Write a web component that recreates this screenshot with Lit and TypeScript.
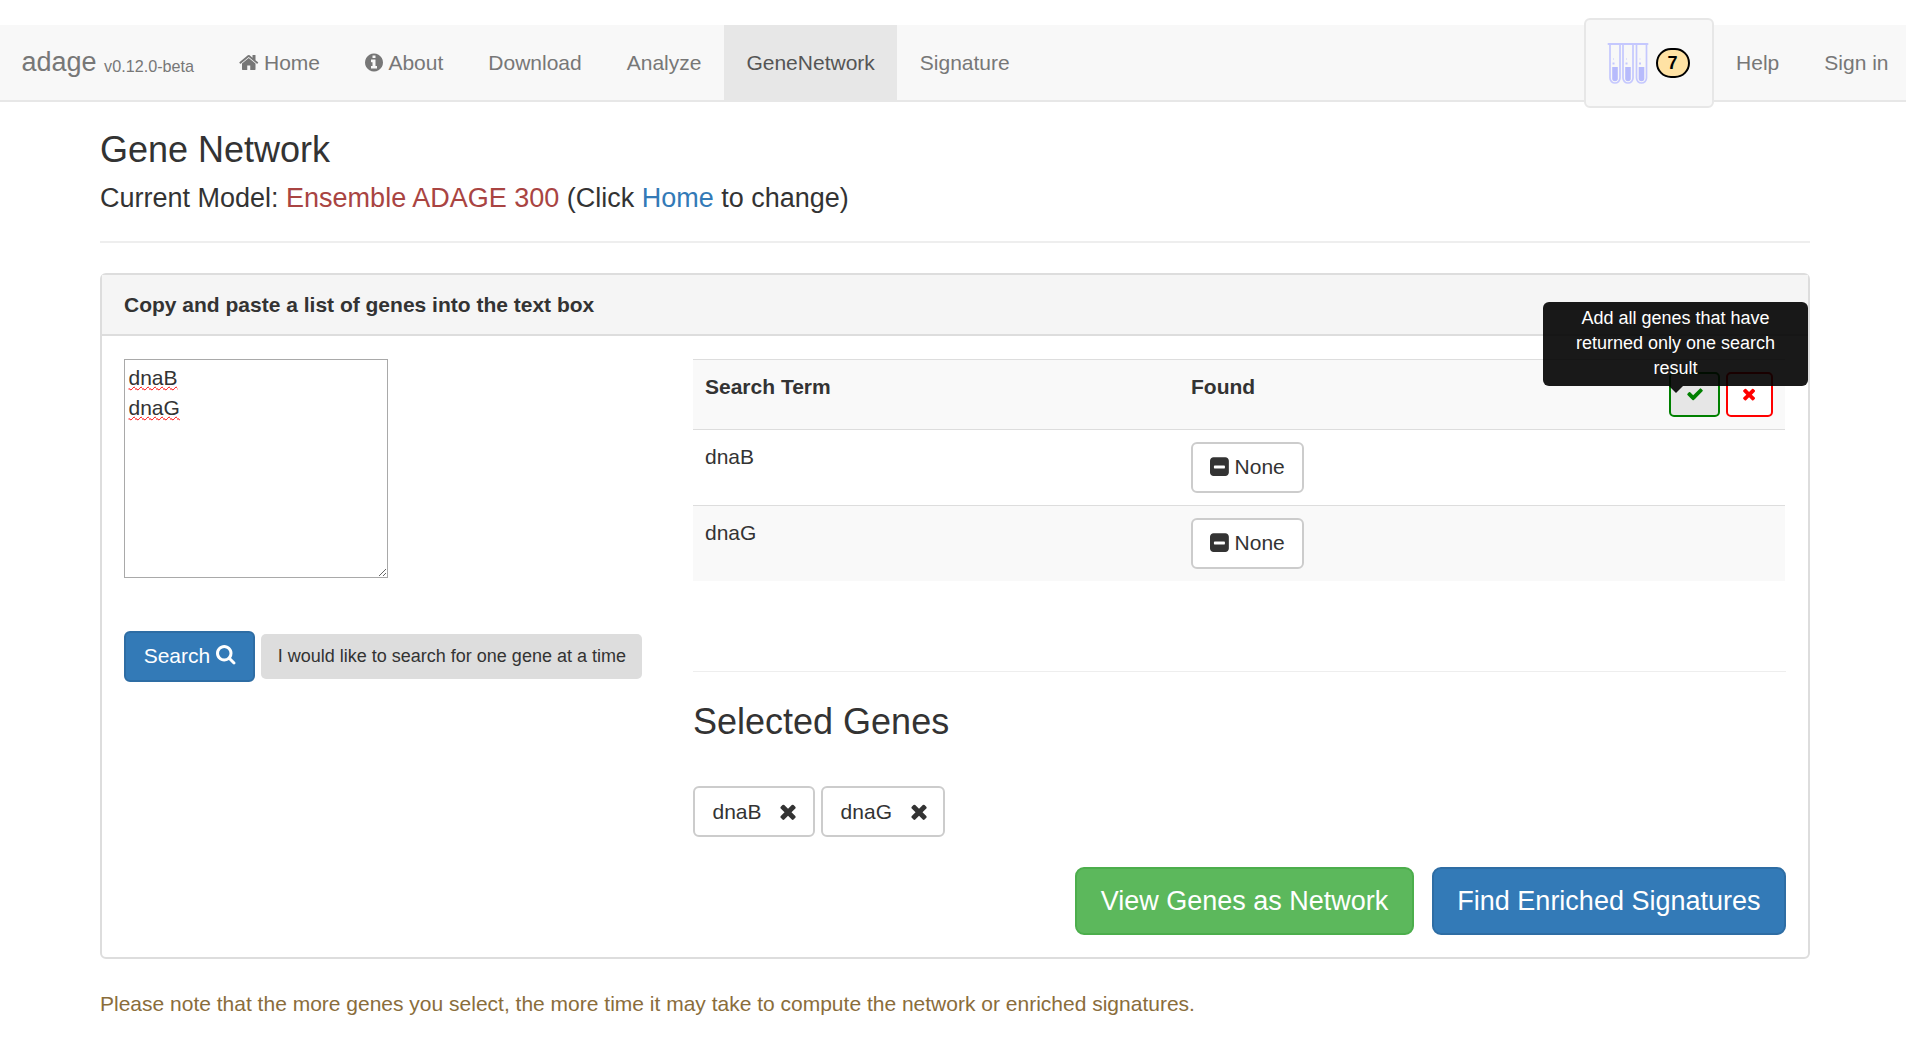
import { LitElement, html, css, svg } from 'lit';
import { customElement } from 'lit/decorators.js';

const icon = (w: number, d: string, size: number) => html`
  <svg class="icon" viewBox="0 0 ${w} 1792" width=${(size * w) / 1792} height=${size} fill="currentColor"><path d=${d}></path></svg>
`;

const HOME = 'M1408 992v480q0 26-19 45t-45 19h-384v-384h-256v384h-384q-26 0-45-19t-19-45v-480q0-1 .5-3t.5-3l575-474 575 474q1 2 1 6zm223-69l-62 74q-8 9-21 11h-3q-13 0-21-7l-692-577-692 577q-12 8-24 7-13-2-21-11l-62-74q-8-10-7-23.5t11-21.5l719-599q32-26 76-26t76 26l244 204v-195q0-14 9-23t23-9h192q14 0 23 9t9 23v408l219 182q10 8 11 21.5t-7 23.5z';
const INFO = 'M1024 1376v-160q0-14-9-23t-23-9h-96v-512q0-14-9-23t-23-9h-320q-14 0-23 9t-9 23v160q0 14 9 23t23 9h96v320h-96q-14 0-23 9t-9 23v160q0 14 9 23t23 9h448q14 0 23-9t9-23zm-128-896v-160q0-14-9-23t-23-9h-192q-14 0-23 9t-9 23v160q0 14 9 23t23 9h192q14 0 23-9t9-23zm640 416q0 209-103 385.5t-279.5 279.5-385.5 103-385.5-103-279.5-279.5-103-385.5 103-385.5 279.5-279.5 385.5-103 385.5 103 279.5 279.5 103 385.5z';
const SEARCH = 'M1152 704q0-185-131.5-316.5t-316.5-131.5-316.5 131.5-131.5 316.5 131.5 316.5 316.5 131.5 316.5-131.5 131.5-316.5zm512 832q0 52-38 90t-90 38q-54 0-90-38l-343-342q-179 124-399 124-143 0-273.5-55.5t-225-150-150-225-55.5-273.5 55.5-273.5 150-225 225-150 273.5-55.5 273.5 55.5 225 150 150 225 55.5 273.5q0 220-124 399l343 343q37 37 37 90z';
const CHECK = 'M1671 566q0 40-28 68l-724 724-136 136q-28 28-68 28t-68-28l-136-136-362-362q-28-28-28-68t28-68l136-136q28-28 68-28t68 28l294 295 656-657q28-28 68-28t68 28l136 136q28 28 28 68z';
const TIMES = 'M1298 1322q0 40-28 68l-136 136q-28 28-68 28t-68-28l-294-294-294 294q-28 28-68 28t-68-28l-136-136q-28-28-28-68t28-68l294-294-294-294q-28-28-28-68t28-68l136-136q28-28 68-28t68 28l294 294 294-294q28-28 68-28t68 28l136 136q28 28 28 68t-28 68l-294 294 294 294q28 28 28 68z';
const MINUS = 'M1216 960v-128q0-26-19-45t-45-19h-768q-26 0-45 19t-19 45v128q0 26 19 45t45 19h768q26 0 45-19t19-45zm320-576v960q0 119-84.5 203.5t-203.5 84.5h-960q-119 0-203.5-84.5t-84.5-203.5v-960q0-119 84.5-203.5t203.5-84.5h960q119 0 203.5 84.5t84.5 203.5z';

const tube = (x: number) => svg`
  <path d="M${x} 2 V36 a5 5 0 0 0 10 0 V2" fill="none" stroke="#c5c8fe" stroke-width="1.7"></path>
  <path d="M${x + 2.2} 25 h5.6 V36.5 a2.8 2.8 0 0 1 -5.6 0 Z" fill="#b7bbfc"></path>
  <rect x=${x + 2.5} y="20.5" width="2" height="2" fill="#c5c8fe"></rect>
  <rect x=${x + 3} y="16.5" width="1" height="1" fill="#c5c8fe"></rect>
`;

@customElement('app-root')
export class AppRoot extends LitElement {
  static styles = css`
    :host {
      display: block;
      font-family: 'Liberation Sans', Arial, sans-serif;
      font-size: 21px;
      line-height: 30px;
      color: #333;
      background: #fff;
    }

    .icon {
      flex-shrink: 0;
    }

    .navbar {
      display: flex;
      align-items: stretch;
      margin-top: 25px;
      height: 75px;
      background: #f8f8f8;
      border-bottom: 2px solid #e7e7e7;
      color: #777;
    }

    .brand {
      padding: 0 22.5px 0 21.5px;
      font-size: 27px;
      line-height: 75px;
    }

    .brand small {
      font-size: 16.2px;
      vertical-align: -1px;
    }

    .nav-link {
      display: flex;
      align-items: center;
      gap: 5.4px;
      padding: 0 22.5px;
    }

    .nav-link.active {
      background: #e7e7e7;
      color: #555;
    }

    .nav-link.last {
      padding-right: 17.5px;
    }

    .spacer {
      flex: 1;
    }

    .basket {
      display: flex;
      align-items: center;
      gap: 7px;
      box-sizing: border-box;
      width: 130px;
      height: 90px;
      margin-top: -7px;
      padding-left: 21px;
      background: #f8f8f8;
      border: 2px solid #e7e7e7;
      border-radius: 6px;
    }

    .badge {
      display: flex;
      align-items: center;
      justify-content: center;
      box-sizing: border-box;
      width: 34px;
      height: 30px;
      border: 2px solid #000;
      border-radius: 15px;
      background: #ffe2a4;
      color: #000;
      font-size: 18px;
      font-weight: 700;
    }

    .page {
      padding: 0 96px 0 100px;
    }

    h1 {
      margin: 28px 0 0;
      font-size: 36px;
      font-weight: 500;
      line-height: 40px;
    }

    .model {
      margin: 8px 0 0;
      font-size: 27px;
      line-height: 40px;
    }

    .model .name {
      color: #a94442;
    }

    a {
      color: #337ab7;
      text-decoration: none;
    }

    .rule {
      margin: 23px 0 0;
      border: 0;
      border-top: 2px solid #eee;
    }

    .panel {
      margin-top: 30px;
      border: 2px solid #ddd;
      border-radius: 6px;
    }

    .panel-head {
      height: 59px;
      padding: 0 22px;
      background: #f5f5f5;
      border-bottom: 2px solid #ddd;
      font-weight: 700;
      line-height: 59px;
    }

    .panel-body {
      display: grid;
      grid-template-columns: 1fr 1092px;
      column-gap: 45px;
      padding: 23px 23px 22px 22px;
    }

    .genes-input {
      box-sizing: border-box;
      width: 264px;
      height: 219px;
      padding: 3px 3.5px;
      border: 1px solid #a9a9a9;
      overflow: auto;
      resize: both;
    }

    .genes-input span {
      display: table;
      text-decoration: underline wavy #f00 1.2px;
      text-underline-offset: 1px;
    }

    .search-row {
      display: flex;
      align-items: center;
      gap: 6px;
      margin-top: 53px;
    }

    button {
      font: inherit;
      cursor: pointer;
    }

    .btn-search {
      display: flex;
      align-items: center;
      gap: 5.84px;
      box-sizing: border-box;
      height: 51px;
      padding: 0 17.7px 2px;
      background: #337ab7;
      border: 2px solid #2e6da4;
      border-radius: 6px;
      color: #fff;
    }

    .btn-single {
      box-sizing: border-box;
      height: 45px;
      padding: 0 16.5px 2px;
      background: #ddd;
      border: 0;
      border-radius: 5px;
      color: #333;
      font-size: 18px;
      white-space: nowrap;
    }

    .results {
      display: flex;
      flex-direction: column;
    }

    .table-row {
      display: grid;
      grid-template-columns: 486px 1fr;
      box-sizing: border-box;
      padding: 12px;
      border-top: 1px solid #ddd;
    }

    .table-row.head {
      height: 70px;
      background: #f9f9f9;
      font-weight: 700;
    }

    .table-row.body {
      height: 76px;
    }

    .table-row.odd {
      background: #f9f9f9;
    }

    .head-cell {
      display: flex;
      justify-content: space-between;
    }

    .btn-none {
      display: flex;
      align-items: center;
      gap: 5.7px;
      box-sizing: border-box;
      height: 51px;
      padding: 0 17px 2px;
      background: #fff;
      border: 2px solid #ccc;
      border-radius: 6px;
      color: #333;
    }

    .actions {
      position: relative;
      display: flex;
      gap: 6px;
    }

    .btn-mark {
      display: flex;
      align-items: center;
      justify-content: center;
      box-sizing: border-box;
      height: 45px;
      padding: 0 0 2px;
      border-radius: 5px;
      border: 2px solid;
    }

    .btn-mark.ok {
      width: 51px;
      background: #e6e6e6;
      border-color: #008000;
      color: #008000;
    }

    .btn-mark.no {
      width: 47px;
      background: #fff;
      border-color: #f00;
      color: #f00;
    }

    .tooltip {
      position: absolute;
      left: -126px;
      top: -70px;
      box-sizing: border-box;
      width: 265px;
      height: 84px;
      padding: 4px 12px;
      background: rgba(0, 0, 0, 0.9);
      border-radius: 6px;
      color: #fff;
      font-size: 18px;
      font-weight: 400;
      line-height: 25px;
      text-align: center;
    }

    .tooltip::after {
      content: '';
      position: absolute;
      left: 126px;
      bottom: -7px;
      border-style: solid;
      border-width: 7px 7px 0;
      border-color: rgba(0, 0, 0, 0.9) transparent transparent;
    }

    .divider {
      margin: 90px -1px 0 0;
      border: 0;
      border-top: 1px solid #eee;
    }

    h2 {
      margin: 30px 0 0;
      font-size: 36px;
      font-weight: 500;
      line-height: 40px;
    }

    .chips {
      display: flex;
      gap: 6.5px;
      margin-top: 44px;
    }

    .chip {
      display: flex;
      align-items: center;
      gap: 17.7px;
      box-sizing: border-box;
      height: 51px;
      padding: 0 15.3px 0 17.5px;
      background: #fff;
      border: 2px solid #ccc;
      border-radius: 6px;
      color: #333;
    }

    .submit-row {
      display: flex;
      justify-content: flex-end;
      gap: 18px;
      margin: 30px -1px 0 0;
    }

    .btn-lg {
      box-sizing: border-box;
      height: 68px;
      padding: 0 23.5px;
      border: 2px solid;
      border-radius: 9px;
      color: #fff;
      font-size: 27px;
    }

    .btn-lg.green {
      background: #5cb85c;
      border-color: #4cae4c;
    }

    .btn-lg.blue {
      background: #337ab7;
      border-color: #2e6da4;
    }

    .note {
      margin: 30px 0 0;
      color: #8a6d3b;
    }
  `;

  render() {
    return html`
      <nav class="navbar">
        <div class="brand">adage <small>v0.12.0-beta</small></div>
        <div class="nav-link">${icon(1664, HOME, 21)}Home</div>
        <div class="nav-link">${icon(1536, INFO, 21)}About</div>
        <div class="nav-link">Download</div>
        <div class="nav-link">Analyze</div>
        <div class="nav-link active">GeneNetwork</div>
        <div class="nav-link">Signature</div>
        <div class="spacer"></div>
        <div class="basket">
          <svg width="42" height="42" viewBox="0 0 42 42">
            ${[3, 16, 29.5].map(tube)}
            <rect x="0.5" y="1" width="41" height="2" rx="1" fill="#c5c8fe"></rect>
          </svg>
          <span class="badge">7</span>
        </div>
        <div class="nav-link">Help</div>
        <div class="nav-link last">Sign in</div>
      </nav>

      <main class="page">
        <h1>Gene Network</h1>
        <p class="model">Current Model: <span class="name">Ensemble ADAGE 300</span> (Click <a href="#">Home</a> to change)</p>
        <hr class="rule" />

        <section class="panel">
          <div class="panel-head">Copy and paste a list of genes into the text box</div>
          <div class="panel-body">
            <div class="left">
              <div class="genes-input"><span>dnaB</span><span>dnaG</span></div>
              <div class="search-row">
                <button class="btn-search">Search ${icon(1664, SEARCH, 21)}</button>
                <button class="btn-single">I would like to search for one gene at a time</button>
              </div>
            </div>

            <div class="results">
              <div class="table-row head">
                <div>Search Term</div>
                <div class="head-cell">
                  <span>Found</span>
                  <div class="actions">
                    <div class="tooltip">Add all genes that have returned only one search result</div>
                    <button class="btn-mark ok">${icon(1792, CHECK, 18)}</button>
                    <button class="btn-mark no">${icon(1408, TIMES, 18)}</button>
                  </div>
                </div>
              </div>
              <div class="table-row body">
                <div>dnaB</div>
                <div><button class="btn-none">${icon(1536, MINUS, 22)}None</button></div>
              </div>
              <div class="table-row body odd">
                <div>dnaG</div>
                <div><button class="btn-none">${icon(1536, MINUS, 22)}None</button></div>
              </div>

              <hr class="divider" />
              <h2>Selected Genes</h2>
              <div class="chips">
                <button class="chip">dnaB ${icon(1408, TIMES, 23)}</button>
                <button class="chip">dnaG ${icon(1408, TIMES, 23)}</button>
              </div>
              <div class="submit-row">
                <button class="btn-lg green">View Genes as Network</button>
                <button class="btn-lg blue">Find Enriched Signatures</button>
              </div>
            </div>
          </div>
        </section>

        <p class="note">Please note that the more genes you select, the more time it may take to compute the network or enriched signatures.</p>
      </main>
    `;
  }
}
